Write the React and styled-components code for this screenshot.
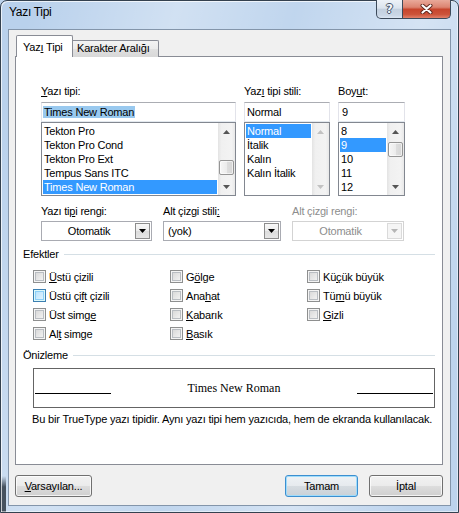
import React from "react";
import styled, { createGlobalStyle, css } from "styled-components";

const GlobalStyle = createGlobalStyle`
  html, body { margin: 0; padding: 0; background: #bcd3ec; }
  body {
    font-family: "Liberation Sans", Arial, sans-serif;
    font-size: 11px;
    letter-spacing: -0.2px;
    color: #000;
  }
  * { box-sizing: border-box; }
`;

const Window = styled.div`
  width: 459px;
  height: 513px;
  display: flex;
  flex-direction: column;
  padding: 0 7px 6px;
  border: 1px solid #34414f;
  border-radius: 7px 7px 0 0;
  background:
    linear-gradient(rgba(70,82,95,0), #46525f 30%, #46525f) left 0 bottom 0 / 5px 36px no-repeat,
    linear-gradient(105deg, rgba(255,255,255,0) 5%, rgba(255,255,255,.35) 30%, rgba(255,255,255,.1) 50%, rgba(255,255,255,.4) 72%, rgba(255,255,255,.05) 92%),
    #b9d1ec;
  box-shadow: inset 1px 1px 0 rgba(255,255,255,.7), inset -1px -1px 0 rgba(255,255,255,.5);
`;

const TitleBar = styled.div`
  height: 28px;
  display: flex;
  align-items: flex-start;
`;

const Title = styled.div`
  flex: 1;
  padding: 4px 0 0 1px;
  font-size: 12px;
  line-height: 15px;
  letter-spacing: -0.3px;
`;

const CaptionButtons = styled.div`
  display: flex;
  margin-top: -1px;
`;

const CaptionButton = styled.div`
  width: ${p => p.$w}px;
  height: 19px;
  display: flex;
  align-items: center;
  justify-content: center;
  border: 1px solid #3c4a5a;
  border-top: none;
  ${p => p.$close ? css`
    border-left: none;
    border-radius: 0 0 5px 0;
    background: linear-gradient(#e9a99a, #dc8471 40%, #c7452d 52%, #cc5339 80%, #e2806a);
  ` : css`
    border-radius: 0 0 0 5px;
    background: linear-gradient(#edf2f8, #dbe4ee 45%, #c3d0df 52%, #cad7e6 85%, #dbe6f2);
  `}
`;

const HelpGlyph = styled.span`
  font-family: "DejaVu Sans", sans-serif;
  font-size: 12px;
  font-weight: bold;
  color: #f4f7fa;
  line-height: 12px;
  text-shadow: 1px 0 0 #44546a, -1px 0 0 #44546a, 0 1px 0 #44546a, 0 -1px 0 #44546a;
`;

const Client = styled.div`
  flex: 1;
  display: flex;
  flex-direction: column;
  background: #f0f0f0;
  border: 1px solid #8395aa;
  padding: 6px 7px 8px 6px;
`;

const TabStrip = styled.div`
  display: flex;
  align-items: flex-end;
  height: 21px;
  margin-bottom: -1px;
  padding-left: 1px;
  position: relative;
  z-index: 1;
`;

const Tab = styled.div`
  width: ${p => p.$w}px;
  border: 1px solid #898c95;
  border-bottom: none;
  line-height: 15px;
  white-space: nowrap;
  ${p => p.$active ? css`
    height: 22px;
    padding: 4px 0 0 6px;
    background: #fff;
    border-radius: 2px 2px 0 0;
  ` : css`
    height: 17px;
    padding: 0 0 0 4px;
    border-left: none;
    border-radius: 0 2px 0 0;
    background: linear-gradient(#f3f3f3, #ebebeb 50%, #e0e0e0 51%, #d8d8d8);
  `}
`;

const Panel = styled.div`
  flex: 1;
  display: flex;
  flex-direction: column;
  background: #fff;
  border: 1px solid #898c95;
  padding: 26px 7px 0 7px;
`;

const FontGrid = styled.div`
  display: grid;
  grid-template-columns: 195px 86px 67px;
  column-gap: 8px;
  margin-left: 18px;
`;

const Column = styled.div`
  display: flex;
  flex-direction: column;
`;

const Label = styled.div`
  line-height: 16px;
  padding-bottom: ${p => p.$pb ?? 3}px;
  white-space: nowrap;
  color: ${p => (p.$disabled ? "#8d8d8d" : "#000")};
`;

const TextField = styled.div`
  height: 20px;
  border: 1px solid #e2e3ea;
  border-top-color: #abadb3;
  border-bottom-color: #e3e9ef;
  padding: 2px 0 0 ${p => p.$pl ?? 1}px;
  line-height: 14px;
  white-space: nowrap;
`;

const Selected = styled.span`
  background: #99c9ef;
  padding: 0 1px;
`;

const ListBox = styled.div`
  height: 74px;
  display: flex;
  border: 1px solid #828790;
  background: #fff;
`;

const Items = styled.div`
  flex: 1;
  padding: 1px 1px 0;
  overflow: hidden;
`;

const Item = styled.div`
  height: 14px;
  line-height: 14px;
  padding-left: 1px;
  white-space: nowrap;
  ${p => p.$selected && css`
    background: #3399ff;
    color: #fff;
  `}
`;

const ScrollBar = styled.div`
  width: 17px;
  display: flex;
  flex-direction: column;
  background: linear-gradient(to right, #e3e3e3, #f0f0f0 20%, #f3f3f3 80%, #e8e8e8);
`;

const ScrollArrow = styled.div`
  height: 17px;
  display: flex;
  align-items: center;
  justify-content: center;
`;

const Track = styled.div`
  flex: 1;
  padding-top: ${p => p.$offset}px;
`;

const Thumb = styled.div`
  height: 15px;
  margin: 0 1px;
  border: 1px solid #959595;
  border-radius: 2px;
  background: linear-gradient(to right, #f6f6f6, #ececec 50%, #dedede 51%, #d6d6d6);
  box-shadow: inset 0 0 0 1px rgba(255,255,255,.6);
`;

const ColorGrid = styled.div`
  display: grid;
  grid-template-columns: 111px 118px 112px;
  column-gap: 11px;
  margin: 7px 0 0 18px;
`;

const Combo = styled.div`
  height: 20px;
  display: flex;
  padding: 1px;
  background: #fff;
  border: 1px solid ${p => (p.$disabled ? "#d3d3d3" : "#a9abb2")};
  color: ${p => (p.$disabled ? "#8d8d8d" : "#000")};
`;

const ComboText = styled.div`
  flex: 1;
  line-height: 16px;
  text-align: ${p => (p.$center ? "center" : "left")};
  padding-left: ${p => (p.$center ? 0 : 3)}px;
`;

const DropButton = styled.div`
  width: 15px;
  display: flex;
  align-items: center;
  justify-content: center;
  border: 1px solid ${p => (p.$disabled ? "#dadada" : "#8c8c8c")};
  background: ${p => (p.$disabled ? "#f5f5f5" : "linear-gradient(#f8f8f8, #ececec 50%, #dcdcdc 51%, #e6e6e6)")};
`;

const GroupHeader = styled.div`
  display: flex;
  align-items: center;
  height: 14px;
  line-height: 14px;
  margin-top: ${p => p.$mt}px;
  &::after {
    content: "";
    flex: 1;
    height: 1px;
    margin-left: 5px;
    background: #d5dfe5;
  }
`;

const CheckGrid = styled.div`
  display: grid;
  grid-template-columns: repeat(3, 137px);
  grid-template-rows: repeat(4, 19px);
  grid-auto-flow: column;
  margin: 6px 0 0 10px;
`;

const CheckRow = styled.div`
  display: flex;
  align-items: center;
  gap: 3px;
  white-space: nowrap;
`;

const Box = styled.div`
  width: 13px;
  height: 13px;
  flex: none;
  ${p => p.$hover ? css`
    border: 1px solid #3c7fb1;
    background: linear-gradient(135deg, #b1dffd, #e9f7fe);
    box-shadow: inset 0 0 0 1px #def9fa, inset 0 0 0 2px #8ccff7;
  ` : css`
    border: 1px solid #8e8f8f;
    background: linear-gradient(135deg, #d3d3d3, #f8f8f8);
    box-shadow: inset 0 0 0 1px #f4f4f4, inset 0 0 0 2px #b9bdc2;
  `}
`;

const Preview = styled.div`
  height: 40px;
  margin: 6px 0 0 10px;
  border: 1px solid #646464;
  display: flex;
  align-items: center;
  justify-content: space-between;
  padding: 0 1px;
`;

const PreviewLine = styled.div`
  width: 76px;
  height: 1px;
  margin-top: 10px;
  background: #000;
`;

const PreviewText = styled.div`
  font-family: "Liberation Serif", "Times New Roman", serif;
  font-size: 12px;
  letter-spacing: 0;
`;

const Note = styled.div`
  margin: 4px 0 0 9px;
  line-height: 15px;
  white-space: nowrap;
  letter-spacing: -0.17px;
`;

const ButtonRow = styled.div`
  display: flex;
  justify-content: space-between;
  margin-top: 10px;
`;

const RightButtons = styled.div`
  display: flex;
  gap: 11px;
`;

const Button = styled.div`
  width: ${p => p.$w}px;
  height: 22px;
  display: flex;
  align-items: center;
  justify-content: center;
  border: 1px solid #707070;
  border-radius: 3px;
  background: linear-gradient(#f2f2f2, #ebebeb 50%, #dddddd 51%, #cfcfcf);
  box-shadow: inset 0 0 0 1px rgba(255,255,255,.75);
  ${p => p.$default && css`
    border-color: #3c8fd0;
    box-shadow: inset 0 0 0 1px #9fdcfb;
    background: linear-gradient(#eef2f5, #e6eaee 50%, #d6dce1 51%, #cad1d7);
  `}
`;

const Key = styled.u`
  text-decoration: underline;
  text-underline-offset: 1px;
`;

const Tri = ({ dir = "down", color = "#000", w = 7, h = 4 }) => (
  <svg width={w} height={h} viewBox={`0 0 ${w} ${h}`}>
    <polygon
      points={dir === "down" ? `0,0 ${w},0 ${w / 2},${h}` : `0,${h} ${w},${h} ${w / 2},0`}
      fill={color}
    />
  </svg>
);

const fontNames = ["Tekton Pro", "Tekton Pro Cond", "Tekton Pro Ext", "Tempus Sans ITC", "Times New Roman"];
const fontStyles = ["Normal", "İtalik", "Kalın", "Kalın İtalik"];
const sizes = ["8", "9", "10", "11", "12"];

const effects = [
  ["", "Ü", "stü çizili"],
  ["Üstü çi", "f", "t çizili", true],
  ["Üst simg", "e", ""],
  ["Al", "t", " simge"],
  ["G", "ö", "lge"],
  ["Ana", "h", "at"],
  ["", "K", "abarık"],
  ["", "B", "asık"],
  ["Kü", "ç", "ük büyük"],
  ["Tü", "m", "ü büyük"],
  ["", "G", "izli"],
];

function List({ items, selected, thumb, disabled }) {
  const arrow = disabled ? "#c2c2c2" : "#555";
  return (
    <ListBox>
      <Items>
        {items.map(it => (
          <Item key={it} $selected={it === selected}>{it}</Item>
        ))}
      </Items>
      <ScrollBar>
        <ScrollArrow><Tri dir="up" color={arrow} /></ScrollArrow>
        <Track $offset={thumb ?? 0}>{thumb !== undefined && <Thumb />}</Track>
        <ScrollArrow><Tri color={arrow} /></ScrollArrow>
      </ScrollBar>
    </ListBox>
  );
}

function ComboBox({ text, center, disabled }) {
  return (
    <Combo $disabled={disabled}>
      <ComboText $center={center}>{text}</ComboText>
      <DropButton $disabled={disabled}>
        <Tri color={disabled ? "#b5b5b5" : "#000"} />
      </DropButton>
    </Combo>
  );
}

export default function App() {
  return (
    <>
      <GlobalStyle />
      <Window>
        <TitleBar>
          <Title>Yazı Tipi</Title>
          <CaptionButtons>
            <CaptionButton $w={27}><HelpGlyph>?</HelpGlyph></CaptionButton>
            <CaptionButton $w={48} $close>
              <svg width="13" height="10" viewBox="0 0 13 10">
                <path d="M2.5 1.5 L10.5 8.5 M10.5 1.5 L2.5 8.5" stroke="#5a241b" strokeWidth="4" strokeLinecap="round" />
                <path d="M2.5 1.5 L10.5 8.5 M10.5 1.5 L2.5 8.5" stroke="#fff" strokeWidth="2.2" strokeLinecap="round" />
              </svg>
            </CaptionButton>
          </CaptionButtons>
        </TitleBar>

        <Client>
          <TabStrip>
            <Tab $active $w={57}>Yaz<Key>ı</Key> Tipi</Tab>
            <Tab $w={86}>Karakter Aralığı</Tab>
          </TabStrip>

          <Panel>
            <FontGrid>
              <Column>
                <Label><Key>Y</Key>azı tipi:</Label>
                <TextField><Selected>Times New Roman</Selected></TextField>
                <List items={fontNames} selected="Times New Roman" thumb={20} />
              </Column>
              <Column>
                <Label>Yaz<Key>ı</Key> tipi stili:</Label>
                <TextField $pl={2}>Normal</TextField>
                <List items={fontStyles} selected="Normal" disabled />
              </Column>
              <Column>
                <Label>Boy<Key>u</Key>t:</Label>
                <TextField $pl={3}>9</TextField>
                <List items={sizes} selected="9" thumb={2} />
              </Column>
            </FontGrid>

            <ColorGrid>
              <Column>
                <Label $pb={2}>Yazı ti<Key>p</Key>i rengi:</Label>
                <ComboBox text="Otomatik" center />
              </Column>
              <Column>
                <Label $pb={2}>Alt çizgi stili<Key>:</Key></Label>
                <ComboBox text="(yok)" />
              </Column>
              <Column>
                <Label $pb={2} $disabled>Alt çizgi rengi:</Label>
                <ComboBox text="Otomatik" center disabled />
              </Column>
            </ColorGrid>

            <GroupHeader $mt={6}>Efektler</GroupHeader>
            <CheckGrid>
              {effects.map(([a, k, b, hover]) => (
                <CheckRow key={a + k + b}>
                  <Box $hover={hover} />
                  <span>{a}<Key>{k}</Key>{b}</span>
                </CheckRow>
              ))}
            </CheckGrid>

            <GroupHeader $mt={5}>Önizleme</GroupHeader>
            <Preview>
              <PreviewLine />
              <PreviewText>Times New Roman</PreviewText>
              <PreviewLine />
            </Preview>
            <Note>Bu bir TrueType yazı tipidir. Aynı yazı tipi hem yazıcıda, hem de ekranda kullanılacak.</Note>
          </Panel>

          <ButtonRow>
            <Button $w={77}><span><Key>V</Key>arsayılan...</span></Button>
            <RightButtons>
              <Button $w={73} $default>Tamam</Button>
              <Button $w={74}>İptal</Button>
            </RightButtons>
          </ButtonRow>
        </Client>
      </Window>
    </>
  );
}
